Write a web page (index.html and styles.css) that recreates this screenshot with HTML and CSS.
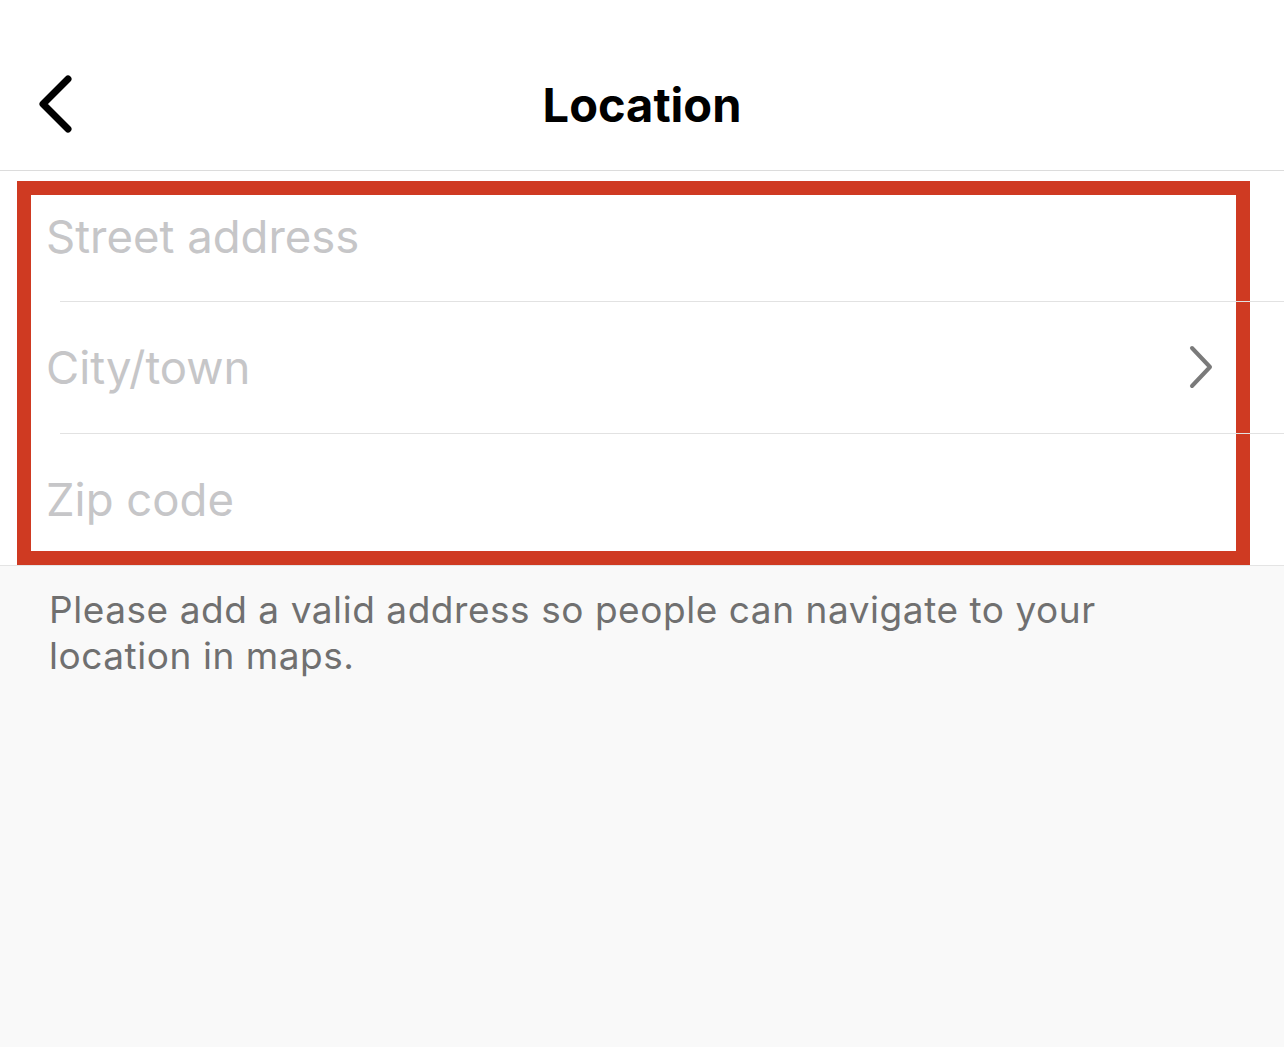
FILE: index.html
```html
<!DOCTYPE html>
<html lang="en">
<head>
    <meta charset="UTF-8">
    <meta name="viewport" content="width=device-width, initial-scale=1.0">
    <title>Location</title>
    <link rel="stylesheet" href="styles.css">
</head>
<body>
    <div class="navbar">
        <a class="back" href="#">
            <svg width="40" height="60" viewBox="0 0 40 60">
                <path d="M32 5 L7 30 L32 55" fill="none" stroke="#000" stroke-width="7" stroke-linecap="round" stroke-linejoin="round"/>
            </svg>
        </a>
        <h1>Location</h1>
    </div>

    <div class="form">
        <div class="highlight">
            <div class="row street">
                <input type="text" placeholder="Street address">
            </div>
            <div class="row">
                <input type="text" placeholder="City/town">
                <svg class="chevron" width="26" height="44" viewBox="0 0 26 44">
                    <path d="M4 3 L22 22 L4 41" fill="none" stroke="#7a7a7a" stroke-width="4" stroke-linecap="round" stroke-linejoin="round"/>
                </svg>
            </div>
            <div class="row zip">
                <input type="text" placeholder="Zip code">
            </div>
        </div>
    </div>

    <div class="note">
        <p>Please add a valid address so people can navigate to your<br>location in maps.</p>
    </div>
</body>
</html>
```

FILE: styles.css
```css
* { margin: 0; padding: 0; box-sizing: border-box; font-family: 'Inter', sans-serif; }
html, body {
    height: 100%;
}
body {
    background-color: #f9f9f9;
}

.navbar {
    background: white;
    height: 171px;
    border-bottom: 1px solid #dcdcdc;
    display: flex;
    align-items: center;
    justify-content: center;
    position: relative;
    padding-top: 38px;
}
.navbar h1 {
    font-size: 47px;
    font-weight: 700;
    color: #000;
}
.back {
    position: absolute;
    left: 36px;
    top: 74px;
    display: block;
    line-height: 0;
}

.form {
    background: white;
    border-bottom: 1px solid #e4e4e4;
    padding: 10px 34px 0 17px;
}

.highlight {
    border: 14px solid #cf3a22;
}

.row {
    height: 132px;
    display: flex;
    align-items: center;
    padding-left: 15px;
    position: relative;
}
.row.street {
    height: 106px;
    padding-bottom: 24px;
}
.row.zip {
    height: 118px;
    padding-top: 14px;
}
.row + .row::before {
    content: "";
    position: absolute;
    top: 0;
    left: 29px;
    right: -48px;
    border-top: 1px solid #e2e2e2;
}

.row input {
    flex: 1;
    border: none;
    outline: none;
    background: transparent;
    font-size: 45.5px;
    color: #222;
}
.row input::placeholder {
    color: #c6c6c8;
}
.chevron {
    margin-right: 22px;
}

.note {
    padding: 21px 49px;
}
.note p {
    font-size: 37px;
    line-height: 46px;
    letter-spacing: 0.55px;
    color: #707070;
}
```
